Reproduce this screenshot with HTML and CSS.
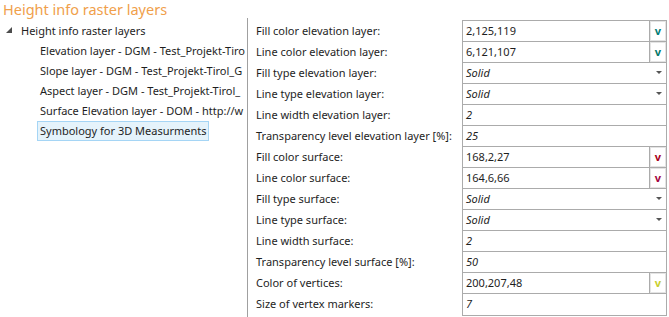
FILE: index.html
```html
<!DOCTYPE html>
<html lang="en">

<head>
    <title>Height info raster layers</title>
    <link rel="stylesheet" href="styles.css">
</head>

<body>
    <h1 class="title">Height info raster layers</h1>
    <div class="panes">
        <div class="tree">
            <div class="tree-root">
                <svg class="expander" width="7" height="7" viewBox="0 0 7 7"><polygon points="6,0 6,6 0,6" fill="#4d4d4d"/></svg>
                <span>Height info raster layers</span>
            </div>
            <ul class="tree-children">
                <li>Elevation layer - DGM - Test_Projekt-Tiro</li>
                <li>Slope layer - DGM - Test_Projekt-Tirol_G</li>
                <li>Aspect layer - DGM - Test_Projekt-Tirol_</li>
                <li>Surface Elevation layer - DOM - http://w</li>
                <li><span class="selected">Symbology for 3D Measurments</span></li>
            </ul>
        </div>
        <div class="splitter"></div>
        <div class="props">
            <div class="label">Fill color elevation layer:</div>
            <div class="value first"><span class="text">2,125,119</span><span class="pick" style="color: rgb(2,125,119);">v</span></div>

            <div class="label">Line color elevation layer:</div>
            <div class="value"><span class="text">6,121,107</span><span class="pick" style="color: rgb(6,121,107);">v</span></div>

            <div class="label">Fill type elevation layer:</div>
            <div class="value"><span class="text italic">Solid</span><span class="arrow"></span></div>

            <div class="label">Line type elevation layer:</div>
            <div class="value"><span class="text italic">Solid</span><span class="arrow"></span></div>

            <div class="label">Line width elevation layer:</div>
            <div class="value"><span class="text italic">2</span></div>

            <div class="label">Transparency level elevation layer [%]:</div>
            <div class="value"><span class="text italic">25</span></div>

            <div class="label">Fill color surface:</div>
            <div class="value"><span class="text">168,2,27</span><span class="pick" style="color: rgb(168,2,27);">v</span></div>

            <div class="label">Line color surface:</div>
            <div class="value"><span class="text">164,6,66</span><span class="pick" style="color: rgb(164,6,66);">v</span></div>

            <div class="label">Fill type surface:</div>
            <div class="value"><span class="text italic">Solid</span><span class="arrow"></span></div>

            <div class="label">Line type surface:</div>
            <div class="value"><span class="text italic">Solid</span><span class="arrow"></span></div>

            <div class="label">Line width surface:</div>
            <div class="value"><span class="text italic">2</span></div>

            <div class="label">Transparency level surface [%]:</div>
            <div class="value"><span class="text italic">50</span></div>

            <div class="label">Color of vertices:</div>
            <div class="value"><span class="text">200,207,48</span><span class="pick" style="color: rgb(200,207,48);">v</span></div>

            <div class="label">Size of vertex markers:</div>
            <div class="value last"><span class="text italic">7</span></div>
        </div>
    </div>
</body>

</html>
```

FILE: styles.css
```css
body {
    margin: 0;
    background: white;
    color: #1e1e1e;
    font-family: "Noto Sans", "Open Sans", sans-serif;
    font-size: 11px;
    overflow: hidden;
}

.title {
    margin: 0;
    padding-left: 3px;
    height: 18px;
    line-height: 18px;
    font-size: 14.5px;
    font-weight: normal;
    color: #f0a04b;
}

.panes {
    display: flex;
    height: 299px;
}

.tree {
    width: 245px;
    overflow: hidden;
    white-space: nowrap;
    padding-top: 3px;
}

.tree-root {
    display: flex;
    align-items: center;
    height: 18px;
    padding-left: 6px;
}

.tree-root .expander {
    margin-right: 8px;
}

.tree-children {
    list-style: none;
    margin: 2px 0 0 0;
    padding: 0 0 0 37px;
}

.tree-children li {
    height: 20px;
    line-height: 20px;
    padding-left: 3px;
    overflow: hidden;
}

.tree-children li .selected {
    display: inline-block;
    margin-left: -3px;
    padding: 0 1px 0 2px;
    height: 18px;
    line-height: 18px;
    background: #e5f3fb;
    border: 1px solid #a5d5f5;
}

.splitter {
    width: 1px;
    margin-left: 2px;
    background: #a0a0a0;
}

.props {
    display: grid;
    grid-template-columns: 214px 205px;
    grid-auto-rows: 21px;
    padding-top: 2px;
}

.label {
    padding-left: 8px;
    line-height: 22px;
    white-space: nowrap;
}

.value {
    display: flex;
    border: 1px solid #ababab;
    border-bottom: none;
    background: white;
}

.value.last {
    border-bottom: 1px solid #ababab;
    height: 21px;
}

.text {
    flex: 1;
    padding-left: 3px;
    line-height: 19px;
}

.italic {
    font-style: italic;
}

.pick {
    width: 16px;
    border-left: 1px solid #ababab;
    box-shadow: inset 0 0 0 1px #e4e4e4;
    text-align: center;
    font-weight: bold;
    font-size: 11px;
    line-height: 19px;
}

.arrow {
    width: 0;
    height: 0;
    margin: 8px 4px 0 0;
    border-left: 3px solid transparent;
    border-right: 3px solid transparent;
    border-top: 3px solid #555;
}
```
